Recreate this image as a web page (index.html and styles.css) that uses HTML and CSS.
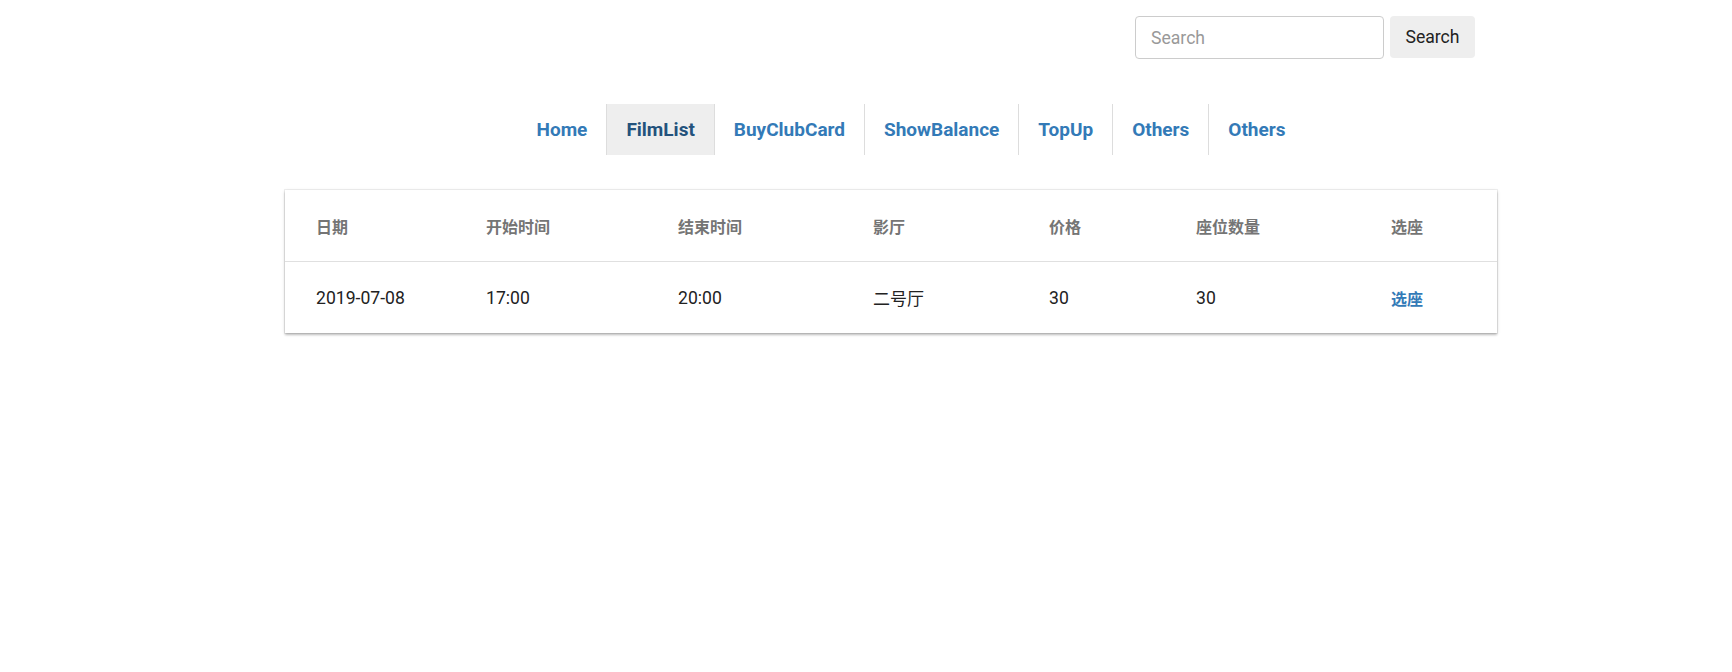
FILE: index.html
```html
<!DOCTYPE html>
<html lang="zh">
<head>
<meta charset="utf-8">
<title>FilmList</title>
<link rel="stylesheet" href="styles.css">
</head>
<body>
<header class="topbar">
  <form class="search">
    <input class="search-input" type="text" placeholder="Search">
    <button class="search-btn" type="button">Search</button>
  </form>
</header>
<nav class="nav">
  <ul class="nav-list">
    <li class="nav-item"><a href="#">Home</a></li>
    <li class="nav-item active"><a href="#">FilmList</a></li>
    <li class="nav-item"><a href="#">BuyClubCard</a></li>
    <li class="nav-item"><a href="#">ShowBalance</a></li>
    <li class="nav-item"><a href="#">TopUp</a></li>
    <li class="nav-item"><a href="#">Others</a></li>
    <li class="nav-item"><a href="#">Others</a></li>
  </ul>
</nav>
<main class="card">
  <div class="row head">
    <div class="cell">日期</div>
    <div class="cell">开始时间</div>
    <div class="cell">结束时间</div>
    <div class="cell">影厅</div>
    <div class="cell">价格</div>
    <div class="cell">座位数量</div>
    <div class="cell">选座</div>
  </div>
  <div class="row body">
    <div class="cell">2019-07-08</div>
    <div class="cell">17:00</div>
    <div class="cell">20:00</div>
    <div class="cell cjk">二号厅</div>
    <div class="cell">30</div>
    <div class="cell">30</div>
    <div class="cell"><a class="pick" href="#">选座</a></div>
  </div>
</main>
</body>
</html>
```

FILE: styles.css
```css
* { box-sizing: border-box; }
html, body { margin: 0; padding: 0; background: #fff; }
html { height: 100%; }
body {
  min-height: 100%;
  padding-bottom: 40px;
  font-family: Roboto, "Noto Sans CJK SC", sans-serif;
  font-size: 17.6px;
  color: #222;
}

.topbar {
  display: flex;
  justify-content: flex-end;
  padding: 16px 257px 0 0;
}
.search { display: flex; gap: 6px; margin: 0; align-items: flex-start; }
.search-input {
  width: 249px;
  height: 43px;
  border: 1px solid #ccc;
  border-radius: 4px;
  padding: 0 15px;
  font-family: inherit;
  font-size: 17.6px;
  color: #333;
  outline: none;
}
.search-input::placeholder { color: #999; }
.search-btn {
  width: 85px;
  height: 42px;
  border: none;
  border-radius: 4px;
  background: #eee;
  font-family: inherit;
  font-size: 17.6px;
  color: #222;
  padding: 0;
}

.nav {
  margin-top: 45px;
  display: flex;
  justify-content: center;
  padding-left: 90px;
}
.nav-list {
  list-style: none;
  margin: 0;
  padding: 0;
  display: flex;
  height: 51px;
}
.nav-item { border-left: 1px solid #ddd; }
.nav-item:first-child { border-left: none; }
.nav-item a {
  display: flex;
  align-items: center;
  height: 100%;
  padding: 0 19px;
  font-weight: 700;
  font-size: 19px;
  color: #337ab7;
  text-decoration: none;
}
.nav-item.active { background: #eee; border-right: 1px solid #ddd; }
.nav-item.active + .nav-item { border-left: none; }
.nav-item.active a { color: #23527c; }

.card {
  margin: 35px 0 0 285px;
  width: 1212px;
  background: #fff;
  box-shadow: 0 0 0 1px rgba(0,0,0,0.06), 0 2px 2px 0 rgba(0,0,0,0.2), 0 1px 4px 0 rgba(0,0,0,0.12);
}
.row {
  display: grid;
  grid-template-columns: 170px 192px 195px 176px 147px 195px 1fr;
  padding: 0 31px;
  height: 71px;
  align-items: center;
}
.row.head {
  height: 72px;
  border-bottom: 1px solid #e0e0e0;
  font-size: 16px;
  font-weight: 700;
  color: #757575;
}
.row.body { color: #222; }
.cjk { font-size: 17px; }
.pick {
  color: #337ab7;
  font-size: 16px;
  font-weight: 700;
  text-decoration: none;
}
```
